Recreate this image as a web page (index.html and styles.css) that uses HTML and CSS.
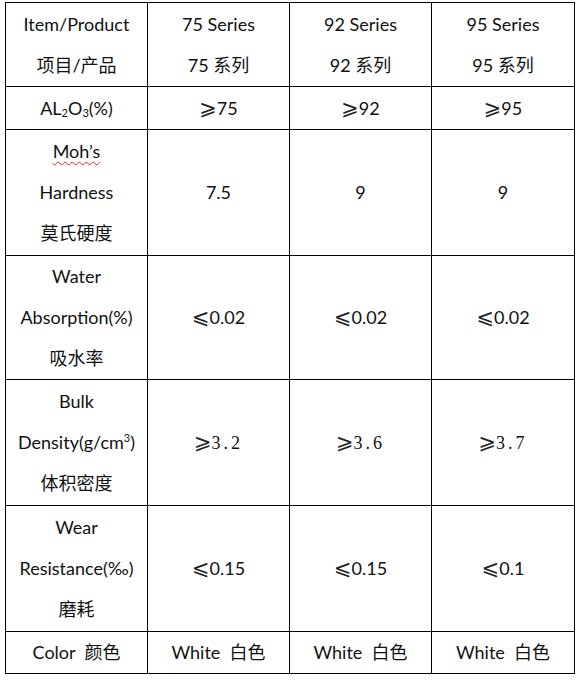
FILE: index.html
```html
<!DOCTYPE html>
<html lang="zh">
<head>
<meta charset="utf-8">
<title>Alumina Ceramic Properties</title>
<link rel="stylesheet" href="styles.css">
</head>
<body>
<div class="page">
<table class="spec">
  <colgroup>
    <col class="c1"><col class="c2"><col class="c3"><col class="c4">
  </colgroup>
  <tr class="r-head">
    <td>Item/Product<br>项目/产品</td>
    <td>75 Series<br>75 系列</td>
    <td>92 Series<br>92 系列</td>
    <td>95 Series<br>95 系列</td>
  </tr>
  <tr class="r-al">
    <td>AL<sub>2</sub>O<sub>3</sub>(%)</td>
    <td><span class="sym">⩾</span>75</td>
    <td><span class="sym">⩾</span>92</td>
    <td><span class="sym">⩾</span>95</td>
  </tr>
  <tr class="r-tall r-moh">
    <td><span class="spell">Moh’s</span><br>Hardness<br>莫氏硬度</td>
    <td>7.5</td>
    <td>9</td>
    <td>9</td>
  </tr>
  <tr class="r-tall r-water">
    <td>Water<br>Absorption(%)<br>吸水率</td>
    <td><span class="sym">⩽</span>0.02</td>
    <td><span class="sym">⩽</span>0.02</td>
    <td><span class="sym">⩽</span>0.02</td>
  </tr>
  <tr class="r-tall r-bulk">
    <td>Bulk<br>Density(g/cm<sup>3</sup>)<br>体积密度</td>
    <td><span class="sym">⩾</span><span class="serif">3.2</span></td>
    <td><span class="sym">⩾</span><span class="serif">3.6</span></td>
    <td><span class="sym">⩾</span><span class="serif">3.7</span></td>
  </tr>
  <tr class="r-tall r-wear">
    <td>Wear<br>Resistance(‰)<br>磨耗</td>
    <td><span class="sym">⩽</span>0.15</td>
    <td><span class="sym">⩽</span>0.15</td>
    <td><span class="sym">⩽</span>0.1</td>
  </tr>
  <tr class="r-color">
    <td>Color &nbsp;颜色</td>
    <td>White &nbsp;白色</td>
    <td>White &nbsp;白色</td>
    <td>White &nbsp;白色</td>
  </tr>
</table>
</div>
</body>
</html>
```
FILE: styles.css
```css
html, body {
  margin: 0;
  padding: 0;
  background: #fff;
}
.page {
  padding: 2px 0 0 5px;
}
.spec {
  border-collapse: collapse;
  table-layout: fixed;
  width: 570px;
  font-family: Lato, "Noto Sans CJK SC", sans-serif;
  font-size: 18px;
  color: #111;
}
.c1, .c2, .c3 { width: 142px; }
.c4 { width: 143px; }
.spec td {
  border: 1px solid #000;
  padding: 0;
  text-align: center;
  vertical-align: middle;
  line-height: 41px;
}
.r-head td { height: 83px; }
.r-al td { height: 42px; }
.r-moh td { height: 125px; }
.r-water td { height: 123px; }
.r-bulk td { height: 125px; }
.r-wear td { height: 125px; }
.r-color td { height: 40px; }
sub, sup {
  font-size: 11px;
  line-height: 0;
}
sub { vertical-align: -2px; }
sup { vertical-align: 7px; }
.sym {
  font-family: "DejaVu Sans", sans-serif;
  font-size: 21px;
  line-height: 0;
  color: #222;
}
.serif {
  font-family: "Liberation Serif", serif;
  font-size: 18px;
  letter-spacing: 3px;
}
.spell {
  text-decoration: underline wavy #d22;
  text-decoration-thickness: 1px;
  text-underline-offset: 3px;
}
```
